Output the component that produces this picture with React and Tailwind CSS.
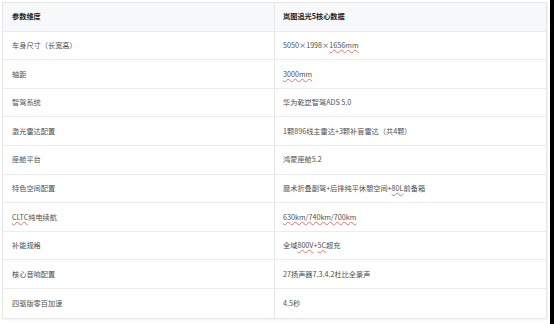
const rows = [
  ['车身尺寸（长宽高）', [['5050×1998×'], ['1656mm', true]]],
  ['轴距', [['3000mm', true]]],
  ['智驾系统', [['华为乾崑智驾ADS 5.0']]],
  ['激光雷达配置', [['1颗896线主雷达+3颗补盲雷达（共4颗）']]],
  ['座舱平台', [['鸿蒙座舱5.2']]],
  ['特色空间配置', [['魔术折叠副驾+后排纯平休憩空间+'], ['80L', true], ['前备箱']]],
  [[['CLTC', true], ['纯电续航']], [['630km/740km/700km', true]]],
  ['补能规格', [['全域'], ['800V', true], ['+'], ['5C', true], ['超充']]],
  ['核心音响配置', [['27扬声器7.3.4.2杜比全景声']]],
  ['四驱版零百加速', [['4.5秒']]],
]

function Cell({ parts }) {
  if (typeof parts === 'string') return <span>{parts}</span>
  return (
    <span>
      {parts.map(([t, wavy], i) =>
        wavy ? (
          <span key={i} className="underline decoration-wavy decoration-[#e8706a] decoration-[length:0.5px] underline-offset-[1px]">{t}</span>
        ) : (
          <span key={i}>{t}</span>
        )
      )}
    </span>
  )
}

export default function App() {
  return (
    <div
      className="w-[554px] h-[324px] bg-white flex overflow-hidden"
      style={{ fontFamily: '"Noto Sans CJK SC", "Noto Sans", sans-serif' }}
    >
      <div className="w-[2px]" />
      <div className="mt-[2px] w-[545px] self-start border border-[#e8e8e8] shadow-[1px_1px_2px_rgba(0,0,0,0.06)]">
        {/* 表头 */}
        <div className="grid grid-cols-[272px_1fr] h-[28.6px] bg-[#f7f8fa] border-b border-[#ececec] text-[7.2px] font-bold text-[#222]">
          <div className="flex items-center pl-[9px] border-r border-[#e8e8e8]">参数维度</div>
          <div className="flex items-center pl-[8px]">岚图追光5核心数据</div>
        </div>
        {rows.map(([k, v], i) => (
          <div
            key={i}
            className={`grid grid-cols-[272px_1fr] h-[28.6px] text-[7.2px] text-[#505050] ${i < rows.length - 1 ? 'border-b border-[#ececec]' : ''}`}
          >
            <div className="flex items-center pl-[9px] border-r border-[#e8e8e8]">
              <Cell parts={k} />
            </div>
            <div className="flex items-center pl-[8px]">
              <Cell parts={v} />
            </div>
          </div>
        ))}
      </div>
      <div className="w-[3px]" />
      <div className="w-[4px] h-full bg-black" />
    </div>
  )
}
